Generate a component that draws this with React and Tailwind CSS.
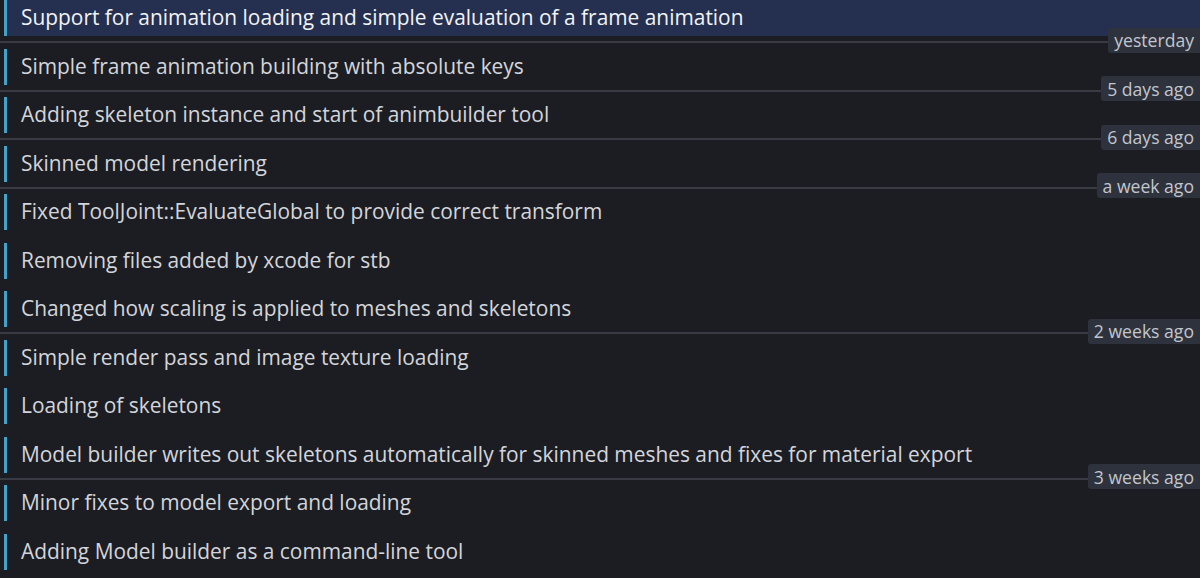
const COMMITS = [
  { msg: 'Support for animation loading and simple evaluation of a frame animation', when: 'yesterday', active: true },
  { msg: 'Simple frame animation building with absolute keys', when: '5 days ago' },
  { msg: 'Adding skeleton instance and start of animbuilder tool', when: '6 days ago' },
  { msg: 'Skinned model rendering', when: 'a week ago' },
  { msg: 'Fixed ToolJoint::EvaluateGlobal to provide correct transform' },
  { msg: 'Removing files added by xcode for stb' },
  { msg: 'Changed how scaling is applied to meshes and skeletons', when: '2 weeks ago' },
  { msg: 'Simple render pass and image texture loading' },
  { msg: 'Loading of skeletons' },
  { msg: 'Model builder writes out skeletons automatically for skinned meshes and fixes for material export', when: '3 weeks ago' },
  { msg: 'Minor fixes to model export and loading' },
  { msg: 'Adding Model builder as a command-line tool' },
];

function Row({ commit }) {
  return (
    <div className="pl-[4px] h-[36px]">
      <div
        className={`h-full flex items-center border-l-[3px] border-[#44a2c8] pl-[14px] text-[20.9px] whitespace-nowrap ${
          commit.active ? 'bg-[#253050] text-[#f2f3f5]' : 'text-[#d3d5da]'
        }`}
      >
        {commit.msg}
      </div>
    </div>
  );
}

function Gap({ when }) {
  return (
    <div className="h-[12.5px] flex items-center">
      {when && (
        <>
          <div className="flex-1 h-[2px] bg-[#383b44]" />
          <div className="relative z-10 -top-[2px] h-[25px] flex items-center pl-[6px] pr-[6px] rounded-l-[3px] bg-[#2e323c] text-[#c3c6cd] text-[17.6px] whitespace-nowrap">
            {when}
          </div>
        </>
      )}
    </div>
  );
}

export default function App() {
  return (
    <div
      className="w-[1200px] h-[578px] overflow-hidden bg-[#1c1d23]"
      style={{ fontFamily: '"Open Sans", "Noto Sans", sans-serif' }}
    >
      {COMMITS.map((c, i) => (
        <div key={i}>
          <Row commit={c} />
          <Gap when={c.when} />
        </div>
      ))}
    </div>
  );
}
